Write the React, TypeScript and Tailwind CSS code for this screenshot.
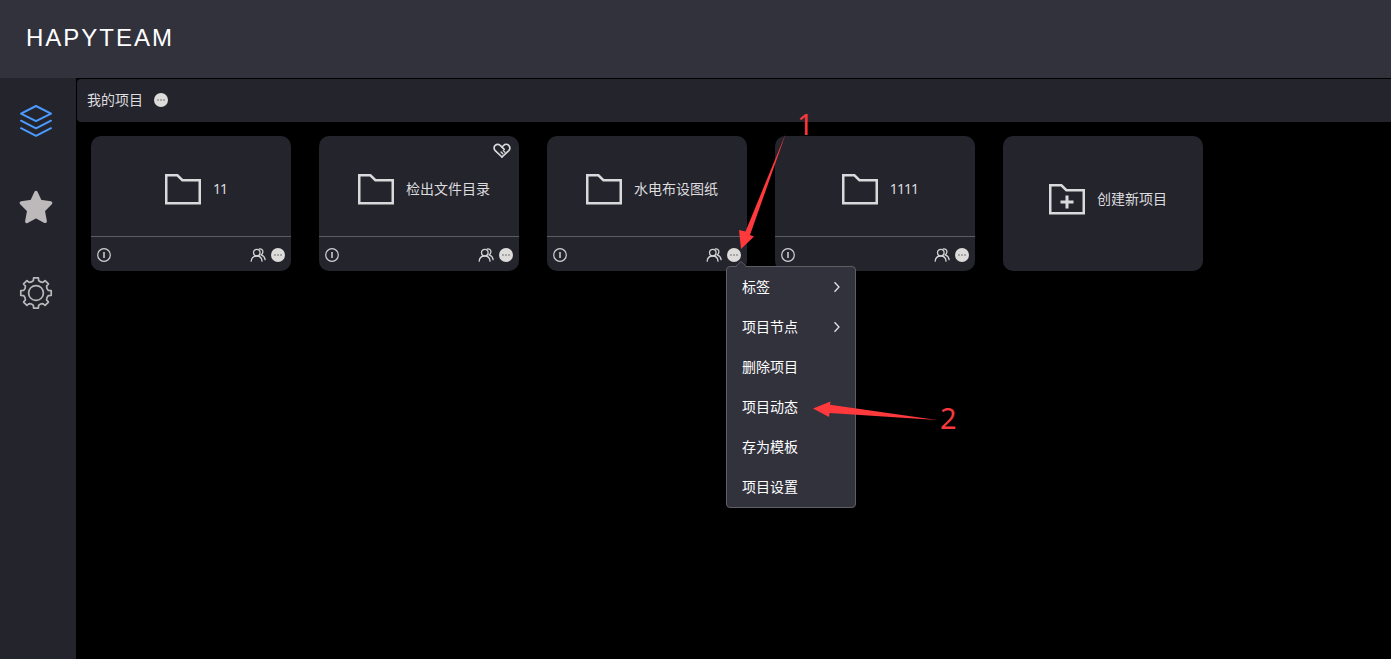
import React from "react";

const toothAngles = [0, 45, 90, 135, 180, 225, 270, 315];

function polar(radius: number, degrees: number) {
  const a = ((degrees - 90) * Math.PI) / 180;
  return `${(17 + radius * Math.cos(a)).toFixed(2)} ${(17 + radius * Math.sin(a)).toFixed(2)}`;
}

const gearPath =
  toothAngles
    .map(
      (a, i) =>
        `${i === 0 ? "M" : "L"}${polar(12.6, a - 12)} L${polar(15.4, a - 9)} L${polar(15.4, a + 9)} L${polar(12.6, a + 12)} Q${polar(11.4, a + 22.5)} ${polar(12.6, a + 33)}`
    )
    .join(" ") + " Z";

function LayersIcon() {
  return (
    <svg width="34" height="34" viewBox="0 0 34 34" fill="none" stroke="#4b9bff" strokeWidth="2" strokeLinejoin="round" strokeLinecap="round">
      <path d="M17 2 L32 9.7 L17 17.2 L2 9.7 Z" />
      <path d="M2 16.7 L17 24.3 L32 16.7" />
      <path d="M2 24.2 L17 31.8 L32 24.2" />
    </svg>
  );
}

function StarIcon() {
  return (
    <svg width="34" height="34" viewBox="0 0 34 34" fill="#bdb9bb" stroke="#bdb9bb" strokeWidth="3.4" strokeLinejoin="round">
      <path d="M17 2.6 L21.2 11.4 L31.6 13 L24.2 20.6 L26.2 31.4 L17 26.6 L7.8 31.4 L9.8 20.6 L2.4 13 L12.8 11.4 Z" />
    </svg>
  );
}

function GearIcon() {
  return (
    <svg width="34" height="34" viewBox="0 0 34 34" fill="none" stroke="#b9b8bb" strokeWidth="1.7" strokeLinejoin="round">
      <path d={gearPath} />
      <circle cx="17" cy="17" r="7.4" />
    </svg>
  );
}

function FolderIcon({ plus = false }: { plus?: boolean }) {
  return (
    <svg className="shrink-0" width="36" height="31" viewBox="0 0 36 31" fill="none" stroke="#dad9dc" strokeWidth="2.5">
      <path d="M1.25 1.25 H12.4 L17.4 6.2 H34.75 V29.3 H1.25 Z" />
      {plus && <path strokeWidth="3" d="M18 11.5 V24.5 M11.5 18 H24.5" />}
    </svg>
  );
}

function MoreIcon() {
  return (
    <svg width="14" height="14" viewBox="0 0 14 14">
      <circle cx="7" cy="7" r="7" fill="#dedcda" />
      <g fill="#55555e">
        <circle cx="4" cy="7" r="0.75" />
        <circle cx="7" cy="7" r="0.75" />
        <circle cx="10" cy="7" r="0.75" />
      </g>
    </svg>
  );
}

function InfoIcon() {
  return (
    <svg width="14" height="14" viewBox="0 0 14 14" fill="none" stroke="#d3d2d5">
      <circle cx="7" cy="7" r="6.3" strokeWidth="1.2" />
      <path d="M7 4 V10" strokeWidth="1.5" />
    </svg>
  );
}

function MembersIcon() {
  return (
    <svg width="16" height="14" viewBox="0 0 16 14" fill="none" stroke="#d3d2d5" strokeWidth="1.3" strokeLinecap="round">
      <circle cx="6.8" cy="4.6" r="3.3" />
      <path d="M1.2 13.2 C1.4 10 3.7 8 6.8 8 C9.9 8 11.8 10 12 13.2" />
      <path d="M9.4 0.9 C11.4 0.6 13 2 12.9 4 C12.8 5.3 12.2 6.2 11.2 6.9 C13.4 7.7 14.8 9.4 15.1 11.6" />
    </svg>
  );
}

function HeartIcon() {
  return (
    <svg width="18" height="16" viewBox="0 0 18 16" fill="none" stroke="#dad9dc" strokeWidth="1.7" strokeLinejoin="round" strokeLinecap="round">
      <path d="M9 14 L2.2 7.6 C0.6 5.8 0.8 3.6 2.2 2.4 C3.8 1 6.2 1.2 7.5 2.7 L11.2 6.4" />
      <path d="M9 4 L10.6 2.5 C12 1.1 14.3 1.1 15.7 2.4 C17.2 3.8 17.3 6 15.8 7.6 L9 14" />
      <path strokeWidth="1.3" d="M8 9 L9.8 10.8 M10.3 7.6 L12 9.3" />
    </svg>
  );
}

function Chevron() {
  return (
    <svg width="8" height="12" viewBox="0 0 8 12" fill="none" stroke="#e4e4e6" strokeWidth="1.3">
      <path d="M1.5 1.2 L6 6 L1.5 10.8" />
    </svg>
  );
}

interface Project {
  name: string;
  liked?: boolean;
  menuOpen?: boolean;
}

const projects: Project[] = [
  { name: "11" },
  { name: "检出文件目录", liked: true },
  { name: "水电布设图纸", menuOpen: true },
  { name: "1111" },
];

const menuItems = [
  { label: "标签", submenu: true },
  { label: "项目节点", submenu: true },
  { label: "删除项目" },
  { label: "项目动态" },
  { label: "存为模板" },
  { label: "项目设置" },
];

function ContextMenu() {
  return (
    <div className="absolute left-[179px] top-[130px] z-10 w-[130px] rounded border border-[#5e5e66] bg-[#32323d] text-white">
      <svg className="absolute -top-[6px] left-[7px]" width="14" height="7" viewBox="0 0 14 7">
        <path d="M1.5 6.5 L7 1 L12.5 6.5 V7 H1.5 Z" fill="#32323d" />
        <path d="M1 6 L7 0.5 L13 6" fill="none" stroke="#5e5e66" />
      </svg>
      <ul>
        {menuItems.map((item) => (
          <li key={item.label} className="flex h-10 items-center justify-between pl-[15px] pr-[14px]">
            <span>{item.label}</span>
            {item.submenu && <Chevron />}
          </li>
        ))}
      </ul>
    </div>
  );
}

function ProjectCard({ project }: { project: Project }) {
  return (
    <article className="relative flex h-[135px] w-[200px] flex-col rounded-[10px] bg-[#24242d]">
      <div className="flex h-[100px] items-center justify-center gap-3 pl-[10px] pt-[6px]">
        <FolderIcon />
        <span className={/^\d+$/.test(project.name) ? "font-['Noto_Sans',sans-serif] tracking-[-0.9px]" : ""}>{project.name}</span>
      </div>
      {project.liked && (
        <div className="absolute right-[8px] top-[7px]">
          <HeartIcon />
        </div>
      )}
      <footer className="flex flex-1 items-center border-t border-[#5c5c64] px-[6px] pb-px pt-[3px]">
        <InfoIcon />
        <div className="ml-auto flex items-center gap-[5px]">
          <MembersIcon />
          <MoreIcon />
        </div>
      </footer>
      {project.menuOpen && <ContextMenu />}
    </article>
  );
}

function Annotations() {
  return (
    <div className="pointer-events-none absolute inset-0 z-20 font-['Noto_Sans',sans-serif] text-[29px] leading-none text-[#f7393d]">
      <svg className="absolute inset-0" width="1391" height="659" viewBox="0 0 1391 659" fill="#ff393c">
        <path d="M786 133 L745.5 231.5 L739 230 L741 249 L754 236.5 L750 235 Z" />
        <path d="M937 420 L830 404.8 L830.5 401.5 L813 408.5 L829 417 L829.5 413 Z" />
      </svg>
      <span className="absolute left-[797px] top-[109px]">1</span>
      <span className="absolute left-[940px] top-[403px]">2</span>
    </div>
  );
}

export default function App() {
  return (
    <div className="relative flex h-[659px] w-[1391px] flex-col overflow-hidden bg-black font-['Liberation_Sans','Noto_Sans_CJK_SC',sans-serif] text-[14px] leading-5 text-[#dddcdf]">
      <header className="flex h-[78px] shrink-0 items-center bg-[#32323d] pl-[26px] pb-[3px]">
        <h1 className="text-[24px] leading-none tracking-[2px] text-white">HAPYTEAM</h1>
      </header>
      <div className="flex flex-1">
        <nav className="flex w-[76px] shrink-0 flex-col items-start gap-[52px] bg-[#24242d] pl-[19px] pt-[26px]">
          <LayersIcon />
          <StarIcon />
          <GearIcon />
        </nav>
        <main className="flex-1 pl-px pt-px">
          <div className="flex h-[43px] items-center gap-[11px] rounded-l bg-[#24242d] pb-[2px] pl-[10px]">
            <h2>我的项目</h2>
            <MoreIcon />
          </div>
          <section className="flex gap-7 pl-[14px] pt-[14px]">
            {projects.map((p) => (
              <ProjectCard key={p.name} project={p} />
            ))}
            <article className="flex h-[135px] w-[200px] items-center justify-center gap-3 rounded-[10px] bg-[#24242d] pb-[9px] pl-[10px]">
              <FolderIcon plus />
              <span className="-mt-px">创建新项目</span>
            </article>
          </section>
        </main>
      </div>
      <Annotations />
    </div>
  );
}
